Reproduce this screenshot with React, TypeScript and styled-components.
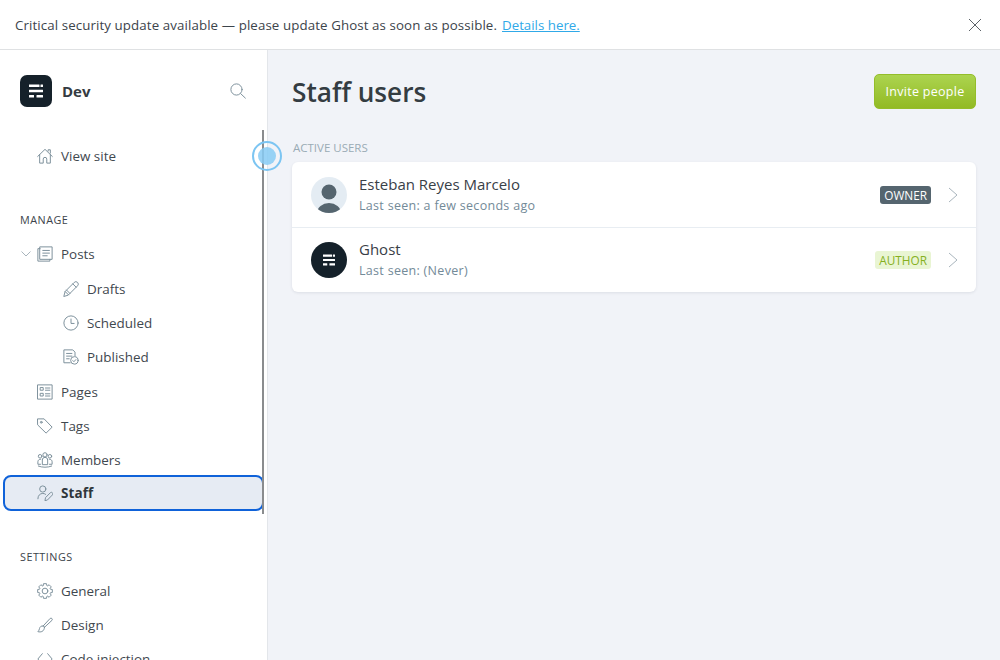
import React, { FC, ReactNode } from 'react';
import styled, { createGlobalStyle } from 'styled-components';

const GlobalStyle = createGlobalStyle`
  html, body {
    margin: 0;
    padding: 0;
    height: 100%;
    overflow: hidden;
    background: #fff;
  }
  body {
    font-family: "Open Sans", "Noto Sans", sans-serif;
    color: #394047;
  }
`;

/* Styled Components */

const Page = styled.div`
  width: 1000px;
  height: 660px;
  display: flex;
  flex-direction: column;
  position: relative;
  overflow: hidden;
`;

const Banner = styled.div`
  height: 49px;
  flex: none;
  display: flex;
  align-items: center;
  justify-content: space-between;
  padding: 0 18px 0 15px;
  background: #fff;
  border-bottom: 1px solid #dfe1e3;
  font-size: 13.3px;
  letter-spacing: 0.1px;
  color: #3c444b;
`;

const BannerLink = styled.a`
  color: #30a9e8;
  text-decoration: underline;
  letter-spacing: 0;
  margin-left: 5px;
`;

const Body = styled.div`
  flex: 1;
  display: flex;
  min-height: 0;
`;

const Sidebar = styled.aside`
  width: 267px;
  flex: none;
  background: #fff;
  border-right: 1px solid #e3e6ea;
  overflow: hidden;
  padding-top: 25px;
`;

const Brand = styled.div`
  height: 32px;
  display: flex;
  align-items: center;
  padding: 0 21px 0 20px;
  margin-bottom: 32px;
`;

const BrandName = styled.div`
  margin-left: 10px;
  flex: 1;
  font-size: 15px;
  font-weight: 700;
  color: #343b42;
`;

const LogoTile = styled.div`
  width: 32px;
  height: 32px;
  border-radius: 7px;
  background: #15212a;
  display: flex;
  align-items: center;
  justify-content: center;
`;

const SectionLabel = styled.div`
  margin: 30px 0 0 20px;
  height: 34px;
  line-height: 34px;
  font-size: 10.8px;
  letter-spacing: 0.5px;
  color: #3c444b;
`;

const SubList = styled.div`
  margin: 1px 0;
`;

const NavRow = styled.div<{ $sub?: boolean; $active?: boolean }>`
  height: 34px;
  display: flex;
  align-items: center;
  position: relative;
  padding-left: ${(props) => (props.$sub ? 63 : 37)}px;
  font-size: 13.45px;
  color: #3f484f;
  ${(props) => props.$active && `
    margin-top: -1px;
    font-weight: 700;
    letter-spacing: 0.1px;
    color: #2f363c;
  `}
`;

const ActiveBox = styled.div`
  position: absolute;
  left: 3px;
  top: -1px;
  width: 257px;
  height: 32px;
  border: 2px solid #0f62d9;
  border-radius: 8px;
  background: #e6ebf3;
`;

const NavIconSlot = styled.span`
  width: 16px;
  height: 16px;
  margin-right: 8px;
  flex: none;
  display: flex;
  position: relative;
`;

const NavText = styled.span`
  position: relative;
`;

const Caret = styled.span`
  position: absolute;
  left: 21px;
  top: 14px;
  display: flex;
`;

const Scrollbar = styled.div`
  position: absolute;
  left: 262px;
  top: 130px;
  width: 2px;
  height: 384px;
  background: #8a8c8e;
`;

const FocusRing = styled.div`
  position: absolute;
  left: 252px;
  top: 141px;
  width: 30px;
  height: 30px;
  box-sizing: border-box;
  border: 2px solid #7cc5f2;
  border-radius: 50%;
  display: flex;
  align-items: center;
  justify-content: center;

  &::after {
    content: '';
    width: 18px;
    height: 18px;
    border-radius: 50%;
    background: rgba(135, 203, 245, 0.85);
  }
`;

const Main = styled.main`
  flex: 1;
  background: #f1f3f8;
  padding: 24px 24px 0 24px;
  min-width: 0;
`;

const TitleBar = styled.div`
  display: flex;
  align-items: center;
  justify-content: space-between;
  height: 35px;
  margin-bottom: 30px;
`;

const Title = styled.h1`
  margin: 0;
  font-size: 26.2px;
  font-weight: 600;
  color: #343c42;
`;

const InviteButton = styled.button`
  width: 102px;
  height: 35px;
  border: 1px solid #94bd2a;
  border-radius: 5px;
  background: linear-gradient(#acd44f, #92ba24);
  color: #fff;
  font-family: inherit;
  font-size: 12.5px;
  letter-spacing: 0.3px;
  padding: 0;
`;

const GroupLabel = styled.div`
  margin-left: 1px;
  height: 23px;
  line-height: 17px;
  font-size: 11.5px;
  color: #9aabb5;
`;

const UserCard = styled.div`
  background: #fff;
  border-radius: 6px;
  box-shadow: 0 1px 3px rgba(40, 50, 70, 0.1);
`;

const UserRow = styled.div`
  height: 65px;
  display: flex;
  align-items: center;
  padding: 0 18px 0 19px;

  & + & {
    height: 64px;
    border-top: 1px solid #e8edf2;
  }
`;

const Avatar = styled.div<{ $dark?: boolean }>`
  width: 36px;
  height: 36px;
  flex: none;
  border-radius: 50%;
  overflow: hidden;
  display: flex;
  align-items: center;
  justify-content: center;
  background: ${(props) => (props.$dark ? '#15212a' : '#e4ecf3')};
`;

const UserInfo = styled.div`
  flex: 1;
  margin-left: 12px;
`;

const UserName = styled.div`
  font-size: 15px;
  line-height: 20px;
  color: #394047;
`;

const LastSeen = styled.div`
  margin-top: 2px;
  font-size: 12.5px;
  line-height: 20px;
  letter-spacing: 0.3px;
  color: #738a98;
`;

const RoleBadge = styled.span<{ $owner?: boolean }>`
  height: 18px;
  line-height: 18px;
  padding: 0 4px;
  border-radius: 3px;
  font-size: 11.8px;
  background: ${(props) => (props.$owner ? '#55656f' : '#e9f5d3')};
  color: ${(props) => (props.$owner ? '#fff' : '#86b01e')};
`;

const Chevron = styled.span`
  display: flex;
  margin-left: 17px;
`;

/* Icons */

const GhostMark: FC<{ size: number }> = ({ size }) => (
  <svg width={size} height={size} viewBox="0 0 14 14" fill="#fff">
    <rect x="0" y="0.5" width="10.5" height="2.6" rx=".3" />
    <rect x="11.5" y="0.5" width="2.5" height="2.6" rx=".3" />
    <rect x="0" y="5.7" width="14" height="2.6" rx=".3" />
    <rect x="0" y="10.9" width="5" height="2.6" rx=".3" />
    <rect x="7.5" y="10.9" width="6.5" height="2.6" rx=".3" />
  </svg>
);

const Line: FC<{ children: ReactNode }> = ({ children }) => (
  <svg
    width={16}
    height={16}
    viewBox="0 0 18 18"
    fill="none"
    stroke="#7c8f9b"
    strokeWidth="1.1"
    strokeLinecap="round"
    strokeLinejoin="round"
  >
    {children}
  </svg>
);

// eight toothed cog outline, easier to compute than to write by hand
const gearPath = (() => {
  const points: string[] = [];
  for (let i = 0; i < 8; i += 1) {
    const mid = (i * Math.PI) / 4 - Math.PI / 2;
    [[-0.33, 6.4], [-0.2, 8.4], [0.2, 8.4], [0.33, 6.4]].forEach(([offset, radius]) => {
      const x = 9 + radius * Math.cos(mid + offset);
      const y = 9 + radius * Math.sin(mid + offset);
      points.push(`${x.toFixed(2)} ${y.toFixed(2)}`);
    });
  }
  return `M${points.join('L')}z`;
})();

const HomeIcon = () => (
  <Line>
    <path d="M.8 9.5 9 1.5l8.2 8" />
    <path d="M3 7.5V17h4v-4.5a2 2 0 0 1 4 0V17h4V7.5" />
    <path d="M12.5 3.5V2H15v3.8" />
  </Line>
);
const PostsIcon = () => (
  <Line>
    <rect x="3.5" y="1" width="13.5" height="14" />
    <path d="M3.5 3H1v14h13.5v-2" />
    <path d="M6.5 5h7.5M6.5 8h7.5M6.5 11h5" />
  </Line>
);
const PencilIcon = () => (
  <Line>
    <path d="M1 17l1.4-5.2L12.6 1.6a2.2 2.2 0 0 1 3.8 3.8L6.2 15.6z" />
    <path d="M2.4 11.8l3.8 3.8M11 3.2l3.8 3.8M4 10.2l3.8 3.8" />
  </Line>
);
const ClockIcon = () => (
  <Line>
    <circle cx="9" cy="9" r="8" />
    <path d="M9 4.5V9.5H12.5" />
  </Line>
);
const PublishedIcon = () => (
  <Line>
    <path d="M8 15.5H1V1h10l2.5 2.5V7.5" />
    <path d="M4 5h6M4 8h6M4 11h3" />
    <circle cx="12.8" cy="12.8" r="4.2" />
    <path d="M11 13l1.3 1.3 2.2-2.4" />
  </Line>
);
const PagesIcon = () => (
  <Line>
    <rect x="1" y="1" width="16" height="16" />
    <rect x="4" y="4" width="3" height="3" />
    <rect x="4" y="10.5" width="3" height="3" />
    <path d="M9.5 4.5h5M9.5 7h5M9.5 11h5M9.5 13.5h5" />
  </Line>
);
const TagIcon = () => (
  <Line>
    <path d="M1 1h7l9 9.3-6.8 6.7L1 8z" />
    <circle cx="4.8" cy="4.8" r="1" />
  </Line>
);
const MembersIcon = () => (
  <Line>
    <circle cx="9" cy="3.2" r="2.4" />
    <circle cx="3.5" cy="4.8" r="2" />
    <circle cx="14.5" cy="4.8" r="2" />
    <path d="M6 13.8V9a3 3 0 0 1 6 0v4.8z" />
    <path d="M4.3 8C2.3 8 1 9.3 1 11v2.8h3M13.7 8c2 0 3.3 1.3 3.3 3v2.8h-3" />
    <path d="M1.5 15.8c4 1.8 11 1.8 15 0" />
  </Line>
);
const StaffIcon = () => (
  <Line>
    <circle cx="6.5" cy="4.5" r="3.5" />
    <path d="M1 15.5c0-3.8 2.4-6 5.5-6 1.2 0 2.3.3 3.2 1" />
    <path d="M9 17.2l.6-3 5.4-5.5a1.7 1.7 0 0 1 2.4 2.4l-5.4 5.5z" />
  </Line>
);
const GearIcon = () => (
  <Line>
    <circle cx="9" cy="9" r="3.2" />
    <path d={gearPath} />
  </Line>
);
const BrushIcon = () => (
  <Line>
    <path d="M7 10 14.8 1.600a1.5 1.5 0 0 1 2.1 2.1L8.5 11.5z" />
    <path d="M7 10c-2.5-.3-3.8 1.2-4.2 3-.3 1.5-.8 2.6-1.8 3.5 3.3.8 7 .2 7.5-5z" />
  </Line>
);
const CodeIcon = () => (
  <Line>
    <path d="M6 3 1 9l5 6M12 3l5 6-5 6" />
  </Line>
);
const SearchIcon = () => (
  <Line>
    <circle cx="7.3" cy="7.3" r="6.3" />
    <path d="M12 12l5.3 5" />
  </Line>
);

const RowChevron = () => (
  <Chevron>
    <svg width="10" height="16" viewBox="0 0 10 16" fill="none" stroke="#a9b5bd">
      <path d="M1 1l8 7-8 7" />
    </svg>
  </Chevron>
);

/* App */

const App: FC = () => (
  <Page>
    <GlobalStyle />
    <Banner>
      <div>
        Critical security update available — please update Ghost as soon as possible.
        <BannerLink href="#">Details here.</BannerLink>
      </div>
      <svg width="14" height="14" viewBox="0 0 14 14" stroke="#5d6369" strokeWidth="1">
        <path d="M1 1l12 12M13 1 1 13" />
      </svg>
    </Banner>
    <Body>
      <Sidebar>
        <Brand>
          <LogoTile>
            <GhostMark size={14} />
          </LogoTile>
          <BrandName>Dev</BrandName>
          <SearchIcon />
        </Brand>
        <NavRow><NavIconSlot><HomeIcon /></NavIconSlot><NavText>View site</NavText></NavRow>
        <SectionLabel>MANAGE</SectionLabel>
        <NavRow>
          <Caret>
            <svg width="10" height="6" viewBox="0 0 10 6" fill="none" stroke="#a9b5bd">
              <path d="M.5.5 5 5 9.5.5" />
            </svg>
          </Caret>
          <NavIconSlot><PostsIcon /></NavIconSlot><NavText>Posts</NavText>
        </NavRow>
        <SubList>
          <NavRow $sub><NavIconSlot><PencilIcon /></NavIconSlot><NavText>Drafts</NavText></NavRow>
          <NavRow $sub><NavIconSlot><ClockIcon /></NavIconSlot><NavText>Scheduled</NavText></NavRow>
          <NavRow $sub><NavIconSlot><PublishedIcon /></NavIconSlot><NavText>Published</NavText></NavRow>
        </SubList>
        <NavRow><NavIconSlot><PagesIcon /></NavIconSlot><NavText>Pages</NavText></NavRow>
        <NavRow><NavIconSlot><TagIcon /></NavIconSlot><NavText>Tags</NavText></NavRow>
        <NavRow><NavIconSlot><MembersIcon /></NavIconSlot><NavText>Members</NavText></NavRow>
        <NavRow $active>
          <ActiveBox />
          <NavIconSlot><StaffIcon /></NavIconSlot><NavText>Staff</NavText>
        </NavRow>
        <SectionLabel>SETTINGS</SectionLabel>
        <NavRow><NavIconSlot><GearIcon /></NavIconSlot><NavText>General</NavText></NavRow>
        <NavRow><NavIconSlot><BrushIcon /></NavIconSlot><NavText>Design</NavText></NavRow>
        <NavRow><NavIconSlot><CodeIcon /></NavIconSlot><NavText>Code injection</NavText></NavRow>
      </Sidebar>
      <Main>
        <TitleBar>
          <Title>Staff users</Title>
          <InviteButton>Invite people</InviteButton>
        </TitleBar>
        <GroupLabel>ACTIVE USERS</GroupLabel>
        <UserCard>
          <UserRow>
            <Avatar>
              <svg width="36" height="36" viewBox="0 0 36 36" fill="#55656f">
                <circle cx="18" cy="15" r="7.5" />
                <ellipse cx="18" cy="36" rx="12" ry="10" />
              </svg>
            </Avatar>
            <UserInfo>
              <UserName>Esteban Reyes Marcelo</UserName>
              <LastSeen>Last seen: a few seconds ago</LastSeen>
            </UserInfo>
            <RoleBadge $owner>OWNER</RoleBadge>
            <RowChevron />
          </UserRow>
          <UserRow>
            <Avatar $dark>
              <GhostMark size={12} />
            </Avatar>
            <UserInfo>
              <UserName>Ghost</UserName>
              <LastSeen>Last seen: (Never)</LastSeen>
            </UserInfo>
            <RoleBadge>AUTHOR</RoleBadge>
            <RowChevron />
          </UserRow>
        </UserCard>
      </Main>
    </Body>
    <Scrollbar />
    <FocusRing />
  </Page>
);

export default App;
